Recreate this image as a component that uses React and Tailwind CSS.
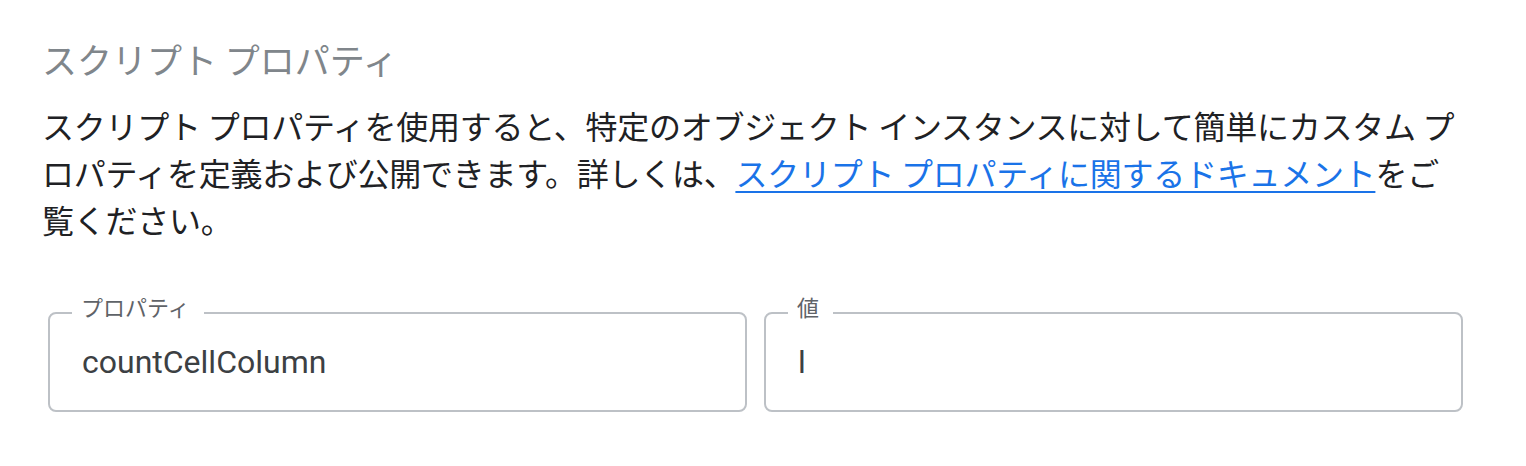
import React from 'react';

const jp = "font-['Noto_Sans_CJK_JP','Noto_Sans',sans-serif]";

const Field = ({ label, value }) => (
    <div className="relative flex-1 h-[100px] border-2 border-[#bdc1c6] rounded-[8px] flex items-center">
        {/* floating label sits over the top border */}
        <span className={`absolute -top-[22px] left-[22px] pl-[9px] pr-[14px] bg-white text-[22px] leading-[28px] text-[#5f6368] ${jp}`}>
            {label}
        </span>
        <span className="pl-[32px] text-[32px] text-[#3c4043] font-['Roboto',sans-serif]">{value}</span>
    </div>
);

export default function App() {
    return (
        <div className={`w-[1526px] h-[466px] bg-white pl-[42px] pt-[33px] ${jp}`}>
            <h2 className="text-[35px] leading-[52px] text-[#80868b] font-normal">スクリプト プロパティ</h2>
            <p className="mt-[17px] w-[1416px] text-[32px] leading-[47px] tracking-[-0.25px] text-[#202124]">
                スクリプト プロパティを使用すると、特定のオブジェクト インスタンスに対して簡単にカスタム プロパティを定義および公開できます。詳しくは、
                <a href="#" className="text-[#1a73e8] underline underline-offset-[5px] decoration-2">
                    スクリプト プロパティに関するドキュメント
                </a>
                をご覧ください。
            </p>
            <div className="mt-[69px] ml-[6px] w-[1415px] flex gap-[17px]">
                <Field label="プロパティ" value="countCellColumn" />
                <Field label="値" value="l" />
            </div>
        </div>
    );
}
